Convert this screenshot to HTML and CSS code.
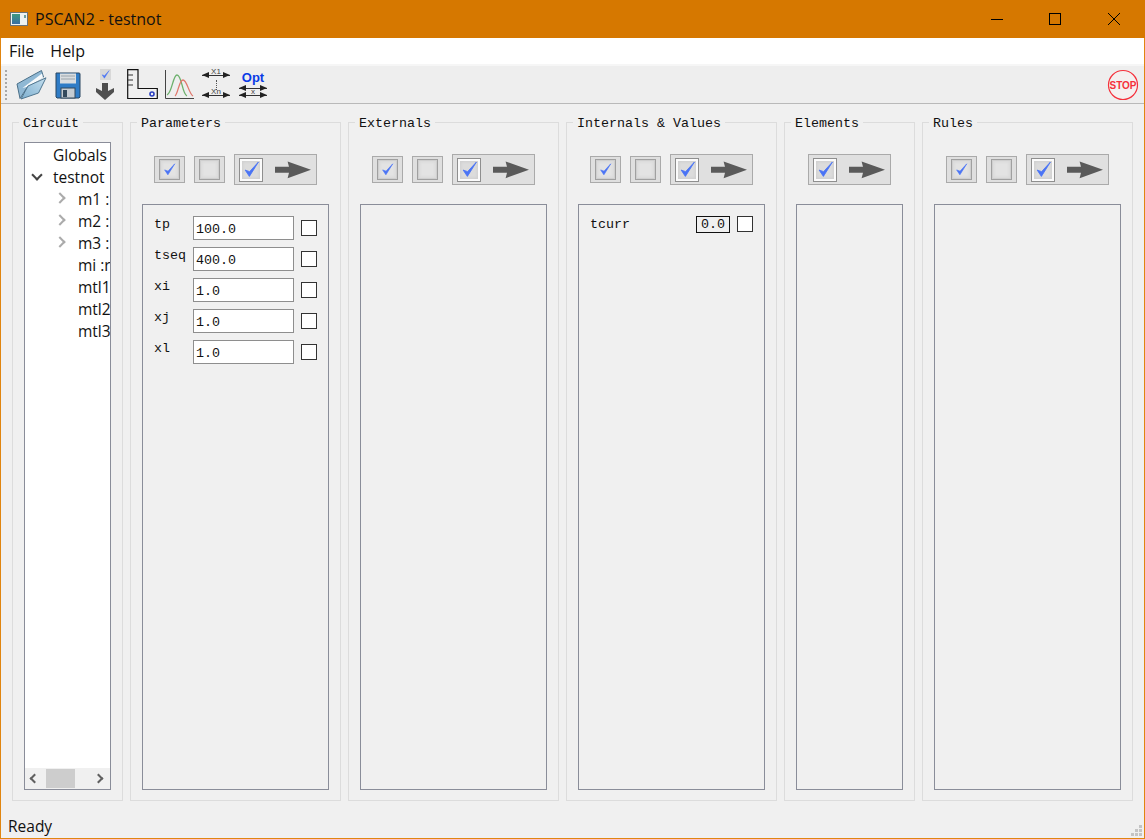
FILE: index.html
```html
<!DOCTYPE html>
<html lang="en">
<head>
  <meta charset="UTF-8">
  <title>PSCAN2 - testnot</title>
  <link rel="stylesheet" href="styles.css">
</head>
<body>
  <svg class="defs" width="0" height="0">
    <defs>
      <linearGradient id="flap" x1="0" y1="1" x2="1" y2="0">
        <stop offset="0" stop-color="#7fb0d0"/>
        <stop offset="1" stop-color="#c3deee"/>
      </linearGradient>
      <linearGradient id="appfill" x1="0" y1="0" x2="0" y2="1">
        <stop offset="0" stop-color="#3f9a80"/>
        <stop offset="1" stop-color="#3a6ea5"/>
      </linearGradient>
    </defs>
    <symbol id="tick" viewBox="0 0 16 16">
      <path d="M2 8.5 L6 14.5 L14.5 1 L6.2 10 Z" fill="#4a74f5" stroke="#4a74f5" stroke-width="0.8"/>
    </symbol>
    <symbol id="arrow" viewBox="0 0 36 18">
      <path d="M0 5.8 H14 L12.6 0.5 L36 8.8 L12.6 17.2 L14 11.8 H0 Z" fill="#5a5a5a"/>
    </symbol>
  </svg>

  <div class="window">
    <div class="titlebar">
      <svg class="appicon" width="18" height="14" viewBox="0 0 18 14">
        <rect x="0.5" y="0.5" width="17" height="13" fill="#eef2f2" stroke="#6a7278"/>
        <rect x="2" y="2" width="8" height="10" fill="url(#appfill)"/>
        <rect x="14" y="3" width="2" height="3" fill="#6d9f9c"/>
      </svg>
      <span class="title">PSCAN2 - testnot</span>
      <div class="winbtns">
        <svg width="12" height="12" viewBox="0 0 12 12"><path d="M0 6.5 H12" stroke="#000"/></svg>
        <svg width="12" height="12" viewBox="0 0 12 12"><rect x="0.5" y="0.5" width="11" height="11" fill="none" stroke="#000"/></svg>
        <svg class="closebtn" width="12" height="12" viewBox="0 0 12 12"><path d="M0 0 L12 12 M12 0 L0 12" stroke="#000"/></svg>
      </div>
    </div>

    <div class="menubar">
      <span>File</span>
      <span>Help</span>
    </div>

    <div class="toolbar">
      <div class="handle"></div>
      <svg class="tool t-open" width="32" height="32" viewBox="0 0 32 32">
        <path d="M5 29.5 L2 15 L20 5 L26.5 1.5 L28.5 8 L13 17 Z" fill="#8fb8d4" stroke="#4a6f88"/>
        <path d="M7.5 19 L21 9 L27 4.5 L28 9 L12 18 Z" fill="#f6f9fb"/>
        <path d="M6 30 L13 17 L31 8.8 L23.5 24 Z" fill="url(#flap)" stroke="#4f7690"/>
      </svg>
      <svg class="tool t-save" width="26" height="28" viewBox="0 0 26 28">
        <path d="M1 2 H24 Q25 2 25 3 V26 L24 27 H2 L1 26 Z" fill="#2f7cc6" stroke="#2a4660"/>
        <rect x="5" y="2.5" width="16" height="10" fill="#d9dde0"/>
        <path d="M6 5 H20 M6 8 H20" stroke="#9aa4ab"/>
        <rect x="6" y="17" width="14" height="10" fill="#c5ccd2" stroke="#33495c"/>
        <rect x="8" y="19" width="4" height="7" fill="#33495c"/>
      </svg>
      <div class="tool t-check">
        <span class="minibox"><svg width="9" height="9"><use href="#tick"/></svg></span>
        <svg width="20" height="17" viewBox="0 0 20 17"><path d="M7 0 H13 V8 L19 5 V9 L10 17 L1 9 V5 L7 8 Z" fill="#4f4f4f"/></svg>
      </div>
      <svg class="tool t-ruler" width="31" height="31" viewBox="0 0 31 31">
        <path d="M0.7 0.7 H11 V19.5 H30.3 V29.5 H0.7 Z" fill="#f0f0f0" stroke="#111" stroke-width="1.2"/>
        <path d="M1 6 H6 M1 11 H6 M1 16 H6" stroke="#333"/>
        <circle cx="25" cy="25" r="2" fill="none" stroke="#2a3fc0" stroke-width="1.6"/>
      </svg>
      <svg class="tool t-curve" width="31" height="31" viewBox="0 0 31 31">
        <path d="M1.5 1 V29.5 H30" fill="none" stroke="#444"/>
        <path d="M3 26 C8 24 9 6 13 6 C18 6 18 25 23 27" fill="none" stroke="#6cb06c" stroke-width="1.3"/>
        <path d="M11 27 C14 25 15 11 19 11 C23 11 25 25 29 27" fill="none" stroke="#e0786c" stroke-width="1.3"/>
      </svg>
      <div class="tool scanicon">
        <div class="dim"><i class="tip-l"></i><b>X1</b><i class="tip-r"></i></div>
        <div class="dots"></div>
        <div class="dim"><i class="tip-l"></i><b>Xn</b><i class="tip-r"></i></div>
      </div>
      <div class="tool opticon">
        <strong>Opt</strong>
        <div class="dim"><i class="tip-l"></i><i class="tip-r"></i></div>
        <div class="dim low"><i class="tip-l"></i><b>x</b><i class="tip-r"></i></div>
      </div>
      <svg class="stop" width="32" height="32" viewBox="0 0 32 32">
        <circle cx="16" cy="16" r="14.5" fill="#f4f0f0" stroke="#f5303c" stroke-width="1.2"/>
        <text x="16" y="19.5" text-anchor="middle" class="stoptext">STOP</text>
      </svg>
    </div>

    <div class="main">
      <fieldset class="group narrow">
        <legend>Circuit</legend>
        <div class="tree">
          <ul class="treerows">
            <li class="lvl0">Globals</li>
            <li class="lvl0"><span class="chev open"></span>testnot</li>
            <li class="lvl1"><span class="chev"></span>m1 :</li>
            <li class="lvl1"><span class="chev"></span>m2 :</li>
            <li class="lvl1"><span class="chev"></span>m3 :</li>
            <li class="lvl1">mi :r</li>
            <li class="lvl1">mtl1</li>
            <li class="lvl1">mtl2</li>
            <li class="lvl1">mtl3</li>
          </ul>
          <div class="hscroll">
            <span class="sarrow left"></span>
            <span class="thumb"></span>
            <span class="sarrow right"></span>
          </div>
        </div>
      </fieldset>

      <fieldset class="group">
        <legend>Parameters</legend>
        <div class="btnrow">
          <button class="smallbtn"><span class="inner"><svg width="13" height="13"><use href="#tick"/></svg></span></button>
          <button class="smallbtn"><span class="inner"></span></button>
          <button class="applybtn"><span class="applybox"><svg width="17" height="17"><use href="#tick"/></svg></span><svg width="36" height="18"><use href="#arrow"/></svg></button>
        </div>
        <div class="list params">
          <div class="row"><label>tp</label><input class="val" value="100.0"><span class="box"></span></div>
          <div class="row"><label>tseq</label><input class="val" value="400.0"><span class="box"></span></div>
          <div class="row"><label>xi</label><input class="val" value="1.0"><span class="box"></span></div>
          <div class="row"><label>xj</label><input class="val" value="1.0"><span class="box"></span></div>
          <div class="row"><label>xl</label><input class="val" value="1.0"><span class="box"></span></div>
        </div>
      </fieldset>

      <fieldset class="group">
        <legend>Externals</legend>
        <div class="btnrow">
          <button class="smallbtn"><span class="inner"><svg width="13" height="13"><use href="#tick"/></svg></span></button>
          <button class="smallbtn"><span class="inner"></span></button>
          <button class="applybtn"><span class="applybox"><svg width="17" height="17"><use href="#tick"/></svg></span><svg width="36" height="18"><use href="#arrow"/></svg></button>
        </div>
        <div class="list"></div>
      </fieldset>

      <fieldset class="group">
        <legend>Internals &amp; Values</legend>
        <div class="btnrow">
          <button class="smallbtn"><span class="inner"><svg width="13" height="13"><use href="#tick"/></svg></span></button>
          <button class="smallbtn"><span class="inner"></span></button>
          <button class="applybtn"><span class="applybox"><svg width="17" height="17"><use href="#tick"/></svg></span><svg width="36" height="18"><use href="#arrow"/></svg></button>
        </div>
        <div class="list internals">
          <div class="introw"><label>tcurr</label><span class="readout">0.0</span><span class="box"></span></div>
        </div>
      </fieldset>

      <fieldset class="group medium">
        <legend>Elements</legend>
        <div class="btnrow">
          <button class="applybtn"><span class="applybox"><svg width="17" height="17"><use href="#tick"/></svg></span><svg width="36" height="18"><use href="#arrow"/></svg></button>
        </div>
        <div class="list"></div>
      </fieldset>

      <fieldset class="group">
        <legend>Rules</legend>
        <div class="btnrow">
          <button class="smallbtn"><span class="inner"><svg width="13" height="13"><use href="#tick"/></svg></span></button>
          <button class="smallbtn"><span class="inner"></span></button>
          <button class="applybtn"><span class="applybox"><svg width="17" height="17"><use href="#tick"/></svg></span><svg width="36" height="18"><use href="#arrow"/></svg></button>
        </div>
        <div class="list"></div>
      </fieldset>
    </div>

    <div class="statusbar">
      <span>Ready</span>
      <svg class="grip" width="11" height="11" viewBox="0 0 11 11">
        <path d="M8 0h3v3H8z M4 4h3v3H4z M8 4h3v3H8z M0 8h3v3H0z M4 8h3v3H4z M8 8h3v3H8z" fill="#c4c4c4"/>
      </svg>
    </div>
  </div>
</body>
</html>
```

FILE: styles.css
```css
html, body {
  margin: 0;
  padding: 0;
  height: 100%;
  overflow: hidden;
}
body {
  font-family: "Open Sans", "Noto Sans", sans-serif;
  font-size: 16px;
  color: #111;
  background: #f0f0f0;
}
.defs {
  position: absolute;
}
.window {
  box-sizing: border-box;
  height: 839px;
  display: flex;
  flex-direction: column;
  border: 1px solid #e08510;
  border-top: 0;
  background: #f0f0f0;
}

/* title bar */
.titlebar {
  height: 38px;
  margin: 0 -1px;
  background: #d67800;
  display: flex;
  align-items: center;
  flex-shrink: 0;
}
.appicon {
  margin-left: 10px;
  margin-right: 7px;
}
.title {
  font-size: 16px;
  color: #111;
}
.winbtns {
  margin-left: auto;
  margin-right: 25px;
  display: flex;
  gap: 46px;
}
.closebtn {
  margin-left: 1px;
}

/* menu */
.menubar {
  height: 26px;
  background: #fff;
  display: flex;
  align-items: center;
  gap: 16px;
  padding-left: 8px;
  border-bottom: 2px solid #f6f6f6;
  flex-shrink: 0;
}

/* toolbar */
.toolbar {
  height: 37px;
  background: #eeeeee;
  border-bottom: 1px solid #b9b9b9;
  display: flex;
  align-items: center;
  padding-left: 4px;
  flex-shrink: 0;
}
.handle {
  width: 2px;
  height: 30px;
  margin-right: 8px;
  background: repeating-linear-gradient(#a8a8a8 0 2px, transparent 2px 4px);
}
.tool {
  flex-shrink: 0;
}
.t-open {
  margin-right: 8px;
}
.t-save {
  margin-right: 13px;
}
.t-check {
  width: 22px;
  height: 32px;
  display: flex;
  flex-direction: column;
  align-items: center;
  gap: 3px;
  margin-right: 11px;
}
.t-ruler {
  margin-right: 6px;
}
.t-curve {
  margin-right: 7px;
}
.minibox {
  width: 11px;
  height: 11px;
  background: #d8d8d8;
  display: flex;
  align-items: center;
  justify-content: center;
}
.scanicon, .opticon {
  width: 28px;
  display: flex;
  flex-direction: column;
  align-self: flex-start;
  font-family: "Liberation Sans", sans-serif;
}
.scanicon {
  height: 28px;
  margin-top: 5px;
  margin-right: 9px;
}
.opticon {
  margin-top: 6px;
}
.dim {
  height: 8px;
  flex-shrink: 0;
  display: flex;
  align-items: center;
  justify-content: space-between;
  background: linear-gradient(#333, #333) center / 100% 1px no-repeat;
}
.dim.low {
  margin-top: -1px;
}
.dim b {
  font-weight: normal;
  font-size: 8px;
  line-height: 8px;
  color: #444;
  margin-top: -6px;
}
.tip-l, .tip-r {
  width: 0;
  height: 0;
  border-top: 3px solid transparent;
  border-bottom: 3px solid transparent;
}
.tip-l {
  border-right: 7px solid #222;
}
.tip-r {
  border-left: 7px solid #222;
}
.dots {
  flex: 1;
  width: 0;
  margin: 1px auto;
  border-left: 1px dotted #555;
}
.opticon strong {
  color: #0a3be6;
  font-size: 13px;
  line-height: 12px;
  text-align: center;
}
.stop {
  margin-left: auto;
  margin-right: 5px;
}
.stoptext {
  font-family: "Liberation Sans", sans-serif;
  font-weight: bold;
  font-size: 10px;
  fill: #f5303c;
}

/* group boxes */
.main {
  flex: 1;
  min-height: 0;
  display: flex;
  gap: 7px;
  padding: 10px 11px 0 11px;
}
.group {
  box-sizing: border-box;
  width: 211px;
  height: 687px;
  margin: 0;
  padding: 11px 11px 10px 11px;
  border: 1px solid #dcdcdc;
  display: flex;
  flex-direction: column;
  min-width: 0;
  flex-shrink: 0;
  font-family: "Liberation Mono", monospace;
  font-size: 13.33px;
}
.narrow {
  width: 111px;
}
.medium {
  width: 131px;
}
legend {
  padding: 2px 4px 0 4px;
  margin-left: -5px;
  color: #111;
  line-height: 15px;
}

/* tree */
.tree {
  flex: 1;
  min-height: 0;
  display: flex;
  flex-direction: column;
  border: 1px solid #8a8d99;
  background: #fff;
  overflow: hidden;
}
.treerows {
  list-style: none;
  flex: 1;
  min-height: 0;
  margin: 0;
  padding: 1px 0 0 0;
  overflow: hidden;
  font-family: "Open Sans", "Noto Sans", sans-serif;
  font-size: 15.5px;
}
.treerows li {
  height: 22px;
  line-height: 22px;
  white-space: nowrap;
  color: #111;
}
.lvl0 {
  position: relative;
  padding-left: 28px;
}
.lvl1 {
  position: relative;
  padding-left: 53px;
}
.chev {
  position: absolute;
  width: 6px;
  height: 6px;
  top: 6px;
  left: 31px;
  border-top: 2px solid #ababab;
  border-right: 2px solid #ababab;
  transform: rotate(45deg);
}
.chev.open {
  left: 8px;
  top: 5px;
  border-color: #444;
  transform: rotate(135deg);
}
.hscroll {
  height: 21px;
  background: #f0f0f0;
  display: flex;
  align-items: center;
  flex-shrink: 0;
}
.thumb {
  width: 29px;
  height: 19px;
  margin-right: auto;
  background: #cdcdcd;
}
.sarrow {
  width: 5px;
  height: 5px;
  border-top: 2px solid #606060;
  border-right: 2px solid #606060;
}
.sarrow.left {
  margin-left: 6px;
  margin-right: 8px;
  transform: rotate(-135deg);
}
.sarrow.right {
  margin-right: 8px;
  transform: rotate(45deg);
}

/* check buttons */
.btnrow {
  box-sizing: border-box;
  height: 52px;
  margin-bottom: 10px;
  padding-top: 12px;
  display: flex;
  align-items: flex-start;
  justify-content: center;
  gap: 9px;
  flex-shrink: 0;
}
button {
  padding: 0;
  margin: 0;
  font: inherit;
}
.smallbtn {
  width: 31px;
  height: 27px;
  margin-top: 2px;
  background: #dfdfdf;
  border: 1px solid #aaaaaa;
  display: flex;
  align-items: center;
  justify-content: center;
}
.inner {
  width: 21px;
  height: 21px;
  box-sizing: border-box;
  background: #e3e3e3;
  border: 1px solid #a0a0a0;
  display: flex;
  align-items: center;
  justify-content: center;
  box-shadow: inset 0 0 0 1px #cfcfcf, inset 0 0 3px 2px #d8d8d8;
}
.applybtn {
  width: 83px;
  height: 31px;
  box-sizing: border-box;
  background: #e0e0e0;
  border: 1px solid #aaaaaa;
  display: flex;
  align-items: center;
  gap: 12px;
  padding-left: 4px;
}
.applybox {
  width: 24px;
  height: 24px;
  box-sizing: border-box;
  border: 1px solid #8f8f8f;
  background: #dcdcdc;
  box-shadow: inset 0 0 0 2px #fbfbfb, inset 0 0 3px 3px #cfcfcf;
  display: flex;
  align-items: center;
  justify-content: center;
}

/* lists */
.list {
  flex: 1;
  min-height: 0;
  border: 1px solid #8a8d99;
  box-sizing: border-box;
}
.params {
  padding: 11px 11px 0 11px;
  display: flex;
  flex-direction: column;
  gap: 7px;
}
.row {
  height: 24px;
  display: flex;
  align-items: center;
}
.row label {
  width: 39px;
  height: 24px;
  line-height: 18px;
  flex-shrink: 0;
}
.val {
  box-sizing: border-box;
  width: 101px;
  height: 24px;
  padding: 2px 2px 0 2px;
  border: 1px solid #8e8e8e;
  border-radius: 0;
  outline: 0;
  background: #fff;
  color: #111;
  font: inherit;
  margin-right: 7px;
}
.box {
  box-sizing: border-box;
  width: 16px;
  height: 16px;
  flex-shrink: 0;
  background: #fff;
  border: 1px solid #333;
}
.internals {
  padding: 11px 11px 0 11px;
}
.introw {
  display: flex;
  align-items: flex-start;
  height: 18px;
}
.introw label {
  flex: 1;
  line-height: 17px;
}
.readout {
  box-sizing: border-box;
  width: 34px;
  height: 17px;
  border: 1px solid #111;
  background: #f0f0f0;
  text-align: center;
  line-height: 16px;
  margin-right: 7px;
}

/* status bar */
.statusbar {
  flex: 1;
  display: flex;
  align-items: flex-end;
  justify-content: space-between;
  padding: 0 2px 1px 7px;
  line-height: 22px;
  font-size: 15.5px;
}
.grip {
  margin-bottom: 1px;
}
```
